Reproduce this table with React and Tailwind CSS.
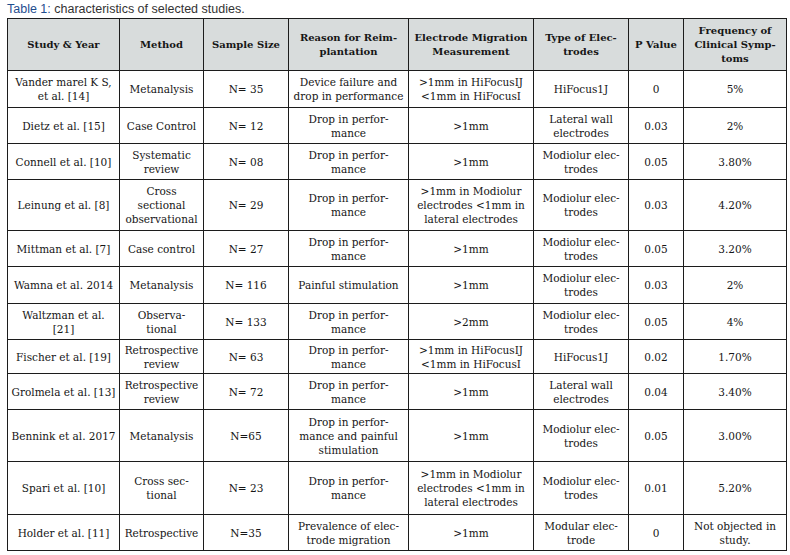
const columns = [112, 84, 85, 120, 125, 95, 55, 103];

const header = [
  ["Study & Year"],
  ["Method"],
  ["Sample Size"],
  ["Reason for Reim-", "plantation"],
  ["Electrode Migration", "Measurement"],
  ["Type of Elec-", "trodes"],
  ["P Value"],
  ["Frequency of", "Clinical Symp-", "toms"],
];

// each cell is a list of lines, wrapped as in the printed table
const rows = [
  { h: 37, cells: [["Vander marel K S,", "et al. [14]"], ["Metanalysis"], ["N= 35"], ["Device failure and", "drop in performance"], [">1mm in HiFocusIJ", "<1mm in HiFocusI"], ["HiFocus1J"], ["0"], ["5%"]] },
  { h: 36, cells: [["Dietz et al. [15]"], ["Case Control"], ["N= 12"], ["Drop in perfor-", "mance"], [">1mm"], ["Lateral wall", "electrodes"], ["0.03"], ["2%"]] },
  { h: 36, cells: [["Connell et al. [10]"], ["Systematic", "review"], ["N= 08"], ["Drop in perfor-", "mance"], [">1mm"], ["Modiolur elec-", "trodes"], ["0.05"], ["3.80%"]] },
  { h: 51, cells: [["Leinung et al. [8]"], ["Cross", "sectional", "observational"], ["N= 29"], ["Drop in perfor-", "mance"], [">1mm in Modiolur", "electrodes <1mm in", "lateral electrodes"], ["Modiolur elec-", "trodes"], ["0.03"], ["4.20%"]] },
  { h: 36, cells: [["Mittman et al. [7]"], ["Case control"], ["N= 27"], ["Drop in perfor-", "mance"], [">1mm"], ["Modiolur elec-", "trodes"], ["0.05"], ["3.20%"]] },
  { h: 37, cells: [["Wamna et al. 2014"], ["Metanalysis"], ["N= 116"], ["Painful stimulation"], [">1mm"], ["Modiolur elec-", "trodes"], ["0.03"], ["2%"]] },
  { h: 36, cells: [["Waltzman et al.", "[21]"], ["Observa-", "tional"], ["N= 133"], ["Drop in perfor-", "mance"], [">2mm"], ["Modiolur elec-", "trodes"], ["0.05"], ["4%"]] },
  { h: 34, cells: [["Fischer et al. [19]"], ["Retrospective", "review"], ["N= 63"], ["Drop in perfor-", "mance"], [">1mm in HiFocusIJ", "<1mm in HiFocusI"], ["HiFocus1J"], ["0.02"], ["1.70%"]] },
  { h: 36, cells: [["Grolmela et al. [13]"], ["Retrospective", "review"], ["N= 72"], ["Drop in perfor-", "mance"], [">1mm"], ["Lateral wall", "electrodes"], ["0.04"], ["3.40%"]] },
  { h: 52, cells: [["Bennink et al. 2017"], ["Metanalysis"], ["N=65"], ["Drop in perfor-", "mance and painful", "stimulation"], [">1mm"], ["Modiolur elec-", "trodes"], ["0.05"], ["3.00%"]] },
  { h: 53, cells: [["Spari et al. [10]"], ["Cross sec-", "tional"], ["N= 23"], ["Drop in perfor-", "mance"], [">1mm in Modiolur", "electrodes <1mm in", "lateral electrodes"], ["Modiolur elec-", "trodes"], ["0.01"], ["5.20%"]] },
  { h: 36, cells: [["Holder et al. [11]"], ["Retrospective"], ["N=35"], ["Prevalence of elec-", "trode migration"], [">1mm"], ["Modular elec-", "trode"], ["0"], ["Not objected in", "study."]] },
];

const Lines = ({ lines }) => (
  <>
    {lines.map((l, i) => (
      <div key={i}>{l}</div>
    ))}
  </>
);

export default function App() {
  return (
    <div className="w-[790px] h-[555px] bg-white overflow-hidden">
      <div className="pl-[7px] pt-[1px] h-[18px] text-[12.5px] leading-[16px] text-[#333] font-['Liberation_Sans',Arial,sans-serif]">
        <span className="text-[#1f4e8f]">Table 1:</span> characteristics of selected studies.
      </div>
      <table className="ml-[7px] border-collapse table-fixed text-[#161616] text-[10.5px] leading-[14px] font-['DejaVu_Serif',serif]">
        <colgroup>
          {columns.map((w, i) => (
            <col key={i} style={{ width: w }} />
          ))}
        </colgroup>
        <thead>
          <tr className="h-[52px] bg-[#d8dcdc]">
            {header.map((c, i) => (
              <th key={i} className="border border-[#1c1c1c] px-0 py-0 text-center align-middle font-bold text-[10px] whitespace-nowrap">
                <Lines lines={c} />
              </th>
            ))}
          </tr>
        </thead>
        <tbody>
          {rows.map((r, ri) => (
            <tr key={ri} style={{ height: r.h }}>
              {r.cells.map((c, ci) => (
                <td key={ci} className="border border-[#1c1c1c] px-0 py-0 text-center align-middle whitespace-nowrap">
                  <Lines lines={c} />
                </td>
              ))}
            </tr>
          ))}
        </tbody>
      </table>
    </div>
  );
}
